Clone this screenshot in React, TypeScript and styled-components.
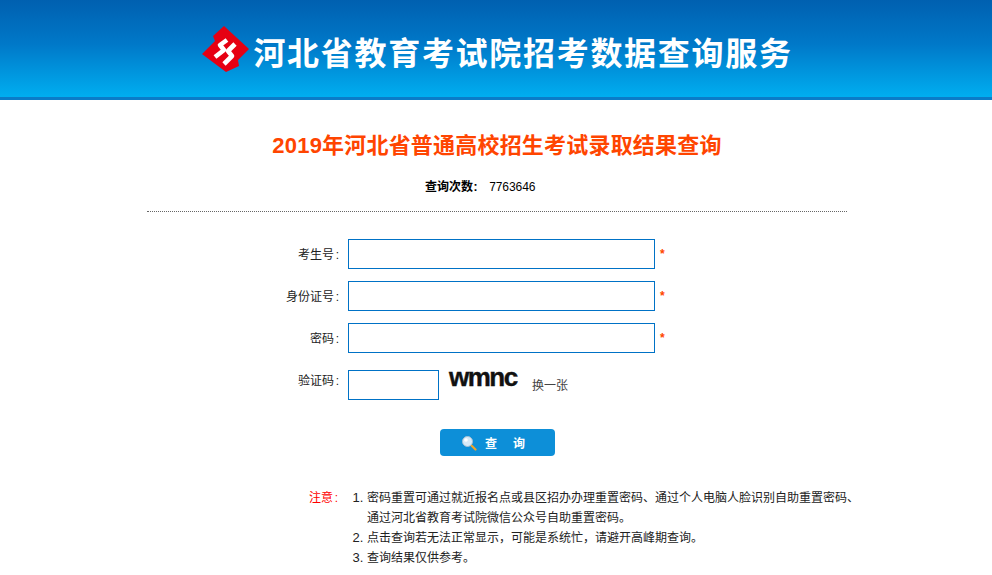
import { FC } from 'react';
import styled, { createGlobalStyle } from 'styled-components';

const CJK = `"Liberation Sans", "Noto Sans CJK SC", sans-serif`;

const GlobalStyle = createGlobalStyle`
  html, body {
    margin: 0;
    padding: 0;
    background: #ffffff;
    font-family: ${CJK};
    font-size: 12px;
    color: #222222;
  }
`;

const fields = ['考生号', '身份证号', '密码'];

const notes = [
  ['密码重置可通过就近报名点或县区招办办理重置密码、通过个人电脑人脸识别自助重置密码、', '通过河北省教育考试院微信公众号自助重置密码。'],
  ['点击查询若无法正常显示\uFF0C可能是系统忙\uFF0C请避开高峰期查询。'],
  ['查询结果仅供参考。'],
];

const Logo: FC = () => (
  <svg width="54" height="56" viewBox="0 0 54 56">
    <polygon points="25,4 50,27 39,38 40,44 27,50 3,32 16,19 14,14" fill="#e60012" />
    <path d="M28 18 L21 23 L25 28 L16 35" fill="none" stroke="#ffffff" strokeWidth="4.6" strokeLinejoin="round" />
    <path d="M36 22 L29 29 L33 34 L25 42" fill="none" stroke="#ffffff" strokeWidth="4.6" strokeLinejoin="round" />
  </svg>
);

const SearchIcon: FC = () => (
  <svg width="16" height="16" viewBox="0 0 16 16">
    <line x1="10" y1="10" x2="14.5" y2="14.5" stroke="#eda52c" strokeWidth="2.2" strokeLinecap="round" />
    <circle cx="6.5" cy="6.5" r="5" fill="#d8eaf8" stroke="#a7c0d4" strokeWidth="1" />
    <circle cx="5" cy="5" r="1.8" fill="#ffffff" />
  </svg>
);

const App: FC = () => {
  return (
    <>
      <GlobalStyle />
      <Header>
        <Logo />
        <HeaderTitle>河北省教育考试院招考数据查询服务</HeaderTitle>
      </Header>
      <Main>
        <PageTitle>2019年河北省普通高校招生考试录取结果查询</PageTitle>
        <Counter>
          <strong>
            查询次数<Colon>:</Colon>
          </strong>
          <CounterValue>7763646</CounterValue>
        </Counter>
        <Form>
          {fields.map((f) => (
            <Row key={f}>
              <Label>
                {f}
                <Colon>:</Colon>
              </Label>
              <Input type="text" />
              <Star>*</Star>
            </Row>
          ))}
          <Row>
            <Label>
              验证码<Colon>:</Colon>
            </Label>
            <Input type="text" $short />
            <CaptchaBox>
              <Captcha>wmnc</Captcha>
            </CaptchaBox>
            <Refresh>换一张</Refresh>
          </Row>
        </Form>
        <SubmitWrap>
          <Submit type="button">
            <SearchIcon />
            <span>查</span>
            <span>询</span>
          </Submit>
        </SubmitWrap>
        <Notes>
          <NotesLabel>
            注意<Colon>:</Colon>
          </NotesLabel>
          <NotesList>
            {notes.map((lines) => (
              <li key={lines[0]}>
                {lines.map((l) => (
                  <div key={l}>{l}</div>
                ))}
              </li>
            ))}
          </NotesList>
        </Notes>
      </Main>
    </>
  );
};

export default App;

const Header = styled.header`
  height: 97px;
  border-bottom: 3px solid #0a7cc8;
  background: linear-gradient(to bottom, #0060b0 0%, #0078c8 45%, #00aef0 100%);
  display: flex;
  align-items: center;
  justify-content: center;

  svg {
    margin-top: 3px;
  }
`;

const HeaderTitle = styled.h1`
  margin: 0;
  padding-top: 5px;
  font-size: 32px;
  font-weight: 700;
  letter-spacing: 1.7px;
  color: #ffffff;
  white-space: nowrap;
`;

const Main = styled.main`
  width: 700px;
  margin-left: 147px;
`;

const PageTitle = styled.h2`
  margin: 0;
  padding-top: 32px;
  line-height: 28px;
  font-size: 22px;
  font-weight: 700;
  letter-spacing: 0.2px;
  text-align: center;
  color: #ff4500;
`;

const Counter = styled.div`
  margin-top: 19px;
  height: 32px;
  padding-right: 34px;
  line-height: 16px;
  text-align: center;
  border-bottom: 1px dotted #666666;
  color: #000000;
`;

const Colon = styled.span`
  display: inline-block;
  width: 5px;
`;

const CounterValue = styled.span`
  margin-left: 11px;
  font-family: "Liberation Mono", monospace;
  font-size: 12px;
  letter-spacing: -0.6px;
`;

const Form = styled.div`
  margin-top: 26px;
  display: flex;
  flex-direction: column;
  gap: 11px;
`;

const Row = styled.div`
  display: flex;
  align-items: center;
  height: 31px;
`;

const Label = styled.label`
  width: 192px;
  text-align: right;
  margin-right: 9px;
  color: #222222;
`;

const Input = styled.input<{ $short?: boolean }>`
  box-sizing: border-box;
  width: ${(p) => (p.$short ? '91px' : '307px')};
  height: 30px;
  margin-top: ${(p) => (p.$short ? '10px' : '0')};
  padding: 0 4px;
  border: 1px solid #0072c6;
  background: #ffffff;
  outline: none;
`;

const Star = styled.span`
  margin-left: 5px;
  color: #ff4500;
  font-weight: 700;
`;

const CaptchaBox = styled.span`
  margin: 0 0 0 10px;
  width: 72px;
  line-height: 26px;
`;

const Captcha = styled.span`
  font-family: "Liberation Sans", sans-serif;
  font-size: 26px;
  font-weight: 700;
  letter-spacing: -1.5px;
  color: #111111;
  -webkit-text-stroke: 0.4px #111111;
`;

const Refresh = styled.span`
  margin: 10px 0 0 11px;
  color: #444444;
`;

const SubmitWrap = styled.div`
  margin-top: 34px;
  padding-left: 293px;
`;

const Submit = styled.button`
  width: 115px;
  height: 27px;
  border: 0;
  border-radius: 4px;
  background: #0d8fd8;
  color: #ffffff;
  font-family: ${CJK};
  font-size: 12px;
  font-weight: 700;
  display: flex;
  align-items: center;
  gap: 16px;
  padding: 0 0 0 21px;

  svg {
    margin-right: -8px;
  }
`;

const Notes = styled.section`
  margin-top: 32px;
  display: flex;
  line-height: 20px;
`;

const NotesLabel = styled.div`
  flex: none;
  width: 191px;
  text-align: right;
  color: #ff0000;
`;

const NotesList = styled.ol`
  flex: none;
  margin: 0;
  padding: 0 0 0 29px;
  white-space: nowrap;
  color: #222222;

  li::marker {
    font-size: 13px;
  }
`;
